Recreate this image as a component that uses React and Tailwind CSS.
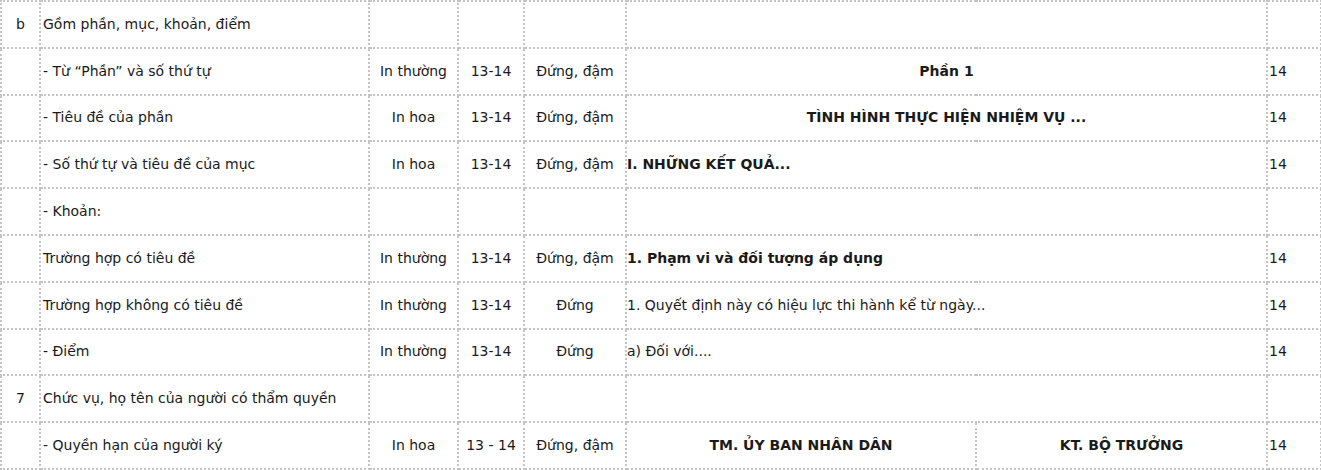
import React from 'react';

const rows = [
  { no: 'b', name: 'Gồm phần, mục, khoản, điểm' },
  { name: '- Từ “Phần” và số thứ tự', kind: 'In thường', size: '13-14', style: 'Đứng, đậm', sample: 'Phần 1', bold: true, center: true, pt: '14' },
  { name: '- Tiêu đề của phần', kind: 'In hoa', size: '13-14', style: 'Đứng, đậm', sample: 'TÌNH HÌNH THỰC HIỆN NHIỆM VỤ ...', bold: true, center: true, pt: '14' },
  { name: '- Số thứ tự và tiêu đề của mục', kind: 'In hoa', size: '13-14', style: 'Đứng, đậm', sample: 'I. NHỮNG KẾT QUẢ...', bold: true, pt: '14' },
  { name: '- Khoản:' },
  { name: 'Trường hợp có tiêu đề', kind: 'In thường', size: '13-14', style: 'Đứng, đậm', sample: '1. Phạm vi và đối tượng áp dụng', bold: true, pt: '14' },
  { name: 'Trường hợp không có tiêu đề', kind: 'In thường', size: '13-14', style: 'Đứng', sample: '1. Quyết định này có hiệu lực thi hành kể từ ngày...', pt: '14' },
  { name: '- Điểm', kind: 'In thường', size: '13-14', style: 'Đứng', sample: 'a) Đối với....', pt: '14' },
  { no: '7', name: 'Chức vụ, họ tên của người có thẩm quyền' },
];

const cell = 'border-2 border-dotted border-[#c4c4c4] p-0 align-middle';

export default function App() {
  return (
    <div className="bg-white w-[1321px] h-[470px] overflow-hidden">
      <table
        className="table-fixed border-collapse text-[14px] text-[#1a1a1a] w-[1320px]"
        style={{ fontFamily: '"DejaVu Sans", Verdana, sans-serif' }}
      >
        <colgroup>
          <col className="w-[39px]" />
          <col className="w-[329px]" />
          <col className="w-[89px]" />
          <col className="w-[66px]" />
          <col className="w-[102px]" />
          <col className="w-[350px]" />
          <col className="w-[291px]" />
          <col className="w-[54px]" />
        </colgroup>
        <tbody>
          {rows.map((r, i) => (
            <tr key={i} className="h-[46.8px]">
              <td className={`${cell} text-center`}>{r.no}</td>
              <td className={`${cell} pl-[2px]`}>{r.name}</td>
              <td className={`${cell} text-center`}>{r.kind}</td>
              <td className={`${cell} text-center`}>{r.size}</td>
              <td className={`${cell} text-center`}>{r.style}</td>
              <td colSpan={2} className={`${cell} ${r.center ? 'text-center' : 'text-left'} ${r.bold ? 'font-bold' : ''}`}>
                {r.sample}
              </td>
              <td className={`${cell} pl-px`}>{r.pt}</td>
            </tr>
          ))}
          <tr className="h-[46.8px]">
            <td className={cell}></td>
            <td className={`${cell} pl-[2px]`}>- Quyền hạn của người ký</td>
            <td className={`${cell} text-center`}>In hoa</td>
            <td className={`${cell} text-center`}>13 - 14</td>
            <td className={`${cell} text-center`}>Đứng, đậm</td>
            <td className={`${cell} text-center font-bold`}>TM. ỦY BAN NHÂN DÂN</td>
            <td className={`${cell} text-center font-bold`}>KT. BỘ TRƯỞNG</td>
            <td className={`${cell} pl-px`}>14</td>
          </tr>
        </tbody>
      </table>
    </div>
  );
}
